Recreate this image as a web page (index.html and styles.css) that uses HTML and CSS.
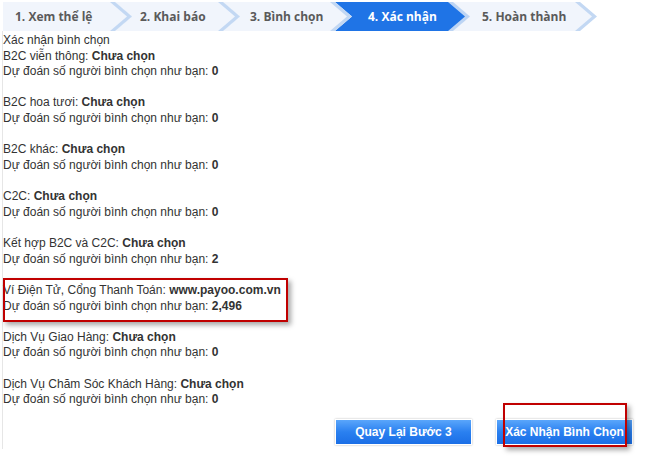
FILE: index.html
```html
<!DOCTYPE html>
<html lang="vi">
  <head>
    <meta charset="UTF-8" />
    <meta name="viewport" content="width=device-width, initial-scale=1.0" />
    <title>Xác nhận bình chọn</title>
    <link rel="stylesheet" href="styles.css">
  </head>
  <body>
    <nav class="steps">
      <div class="step step-1"><span>1. Xem thể lệ</span></div>
      <div class="step step-2"><span>2. Khai báo</span></div>
      <div class="step step-3"><span>3. Bình chọn</span></div>
      <div class="step step-4 active"><span>4. Xác nhận</span></div>
      <div class="step step-5"><span>5. Hoàn thành</span></div>
    </nav>
    <main class="content">
      <p class="title">Xác nhận bình chọn</p>
      <div class="group">
        <p>B2C viễn thông: <b>Chưa chọn</b></p>
        <p>Dự đoán số người bình chọn như bạn: <b>0</b></p>
      </div>
      <div class="group">
        <p>B2C hoa tươi: <b>Chưa chọn</b></p>
        <p>Dự đoán số người bình chọn như bạn: <b>0</b></p>
      </div>
      <div class="group">
        <p>B2C khác: <b>Chưa chọn</b></p>
        <p>Dự đoán số người bình chọn như bạn: <b>0</b></p>
      </div>
      <div class="group">
        <p>C2C: <b>Chưa chọn</b></p>
        <p>Dự đoán số người bình chọn như bạn: <b>0</b></p>
      </div>
      <div class="group">
        <p>Kết hợp B2C và C2C: <b>Chưa chọn</b></p>
        <p>Dự đoán số người bình chọn như bạn: <b>2</b></p>
      </div>
      <div class="group">
        <p>Ví Điện Tử, Cổng Thanh Toán: <b>www.payoo.com.vn</b></p>
        <p>Dự đoán số người bình chọn như bạn: <b>2,496</b></p>
      </div>
      <div class="group">
        <p>Dịch Vụ Giao Hàng: <b>Chưa chọn</b></p>
        <p>Dự đoán số người bình chọn như bạn: <b>0</b></p>
      </div>
      <div class="group">
        <p>Dịch Vụ Chăm Sóc Khách Hàng: <b>Chưa chọn</b></p>
        <p>Dự đoán số người bình chọn như bạn: <b>0</b></p>
      </div>
      <div class="actions">
        <button class="btn">Quay Lại Bước 3</button>
        <button class="btn">Xác Nhận Bình Chọn</button>
      </div>
    </main>
    <!-- red highlight marks -->
    <div class="mark mark-payoo"></div>
    <div class="mark mark-confirm"></div>
  </body>
</html>
```

FILE: styles.css
```css
* {
  padding: 0;
  margin: 0;
  box-sizing: border-box;
}
html {
  font-family: 'Liberation Sans', Arial, sans-serif;
  font-size: 12px;
  color: #333;
  background-color: #fff;
}
body {
  position: relative;
  min-height: 100vh;
  padding: 2px 0 0 2px;
}
.steps {
  display: flex;
  height: 29px;
  padding-left: 1px;
}
.step {
  position: relative;
  flex: none;
  height: 29px;
  margin-right: -17px;
  display: flex;
  align-items: center;
  font-family: 'Open Sans', 'DejaVu Sans', sans-serif;
  font-weight: bold;
  font-size: 12px;
  color: #5a5a5a;
  background-color: #c3d8f3;
  clip-path: polygon(0 0, calc(100% - 17px) 0, 100% 50%, calc(100% - 17px) 100%, 0 100%, 17px 50%);
}
.step::before {
  content: '';
  position: absolute;
  top: 0;
  bottom: 0;
  left: 0;
  right: 5px;
  background-color: #f1f5fc;
  clip-path: polygon(0 0, calc(100% - 17px) 0, 100% 50%, calc(100% - 17px) 100%, 0 100%, 17px 50%);
}
.step span {
  position: relative;
}
.step-1 {
  width: 129px;
  padding-left: 12px;
  clip-path: polygon(0 0, calc(100% - 17px) 0, 100% 50%, calc(100% - 17px) 100%, 0 100%);
}
.step-1::before {
  clip-path: polygon(0 0, calc(100% - 17px) 0, 100% 50%, calc(100% - 17px) 100%, 0 100%);
}
.step-2 {
  width: 125px;
  padding-left: 25px;
}
.step-3 {
  width: 129px;
  padding-left: 27px;
}
.step-4 {
  width: 135px;
  padding-left: 33px;
}
.step-5 {
  width: 144px;
  padding-left: 29px;
}
.step.active {
  color: #fff;
  background-color: #bcd4f4;
}
.step.active::before {
  background-color: #1f74e6;
}
.content {
  border-left: 1px solid #e6e6e6;
  padding: 2px 0 0 0;
  height: 418px;
  line-height: 15.62px;
}
.content p {
  white-space: nowrap;
}
.group {
  margin-bottom: 15.62px;
}
b {
  color: #333;
}
.actions {
  display: flex;
  justify-content: flex-end;
  gap: 24px;
  margin-top: -5px;
  padding-right: 29px;
}
.btn {
  width: 137px;
  height: 26px;
  border: 1px solid #fff;
  box-shadow: 0 0 2px #bbb;
  background: linear-gradient(#5aa6fb, #2a80f0 50%, #1b6fe6);
  color: #fff;
  font-family: 'Liberation Sans', Arial, sans-serif;
  font-weight: bold;
  font-size: 12px;
}
.mark {
  position: absolute;
  border: 2px solid #c00000;
  box-shadow: 3px 3px 5px rgba(0, 0, 0, 0.35);
}
.mark-payoo {
  left: 3px;
  top: 278px;
  width: 285px;
  height: 44px;
}
.mark-confirm {
  left: 503px;
  top: 403px;
  width: 124px;
  height: 44px;
}
```
